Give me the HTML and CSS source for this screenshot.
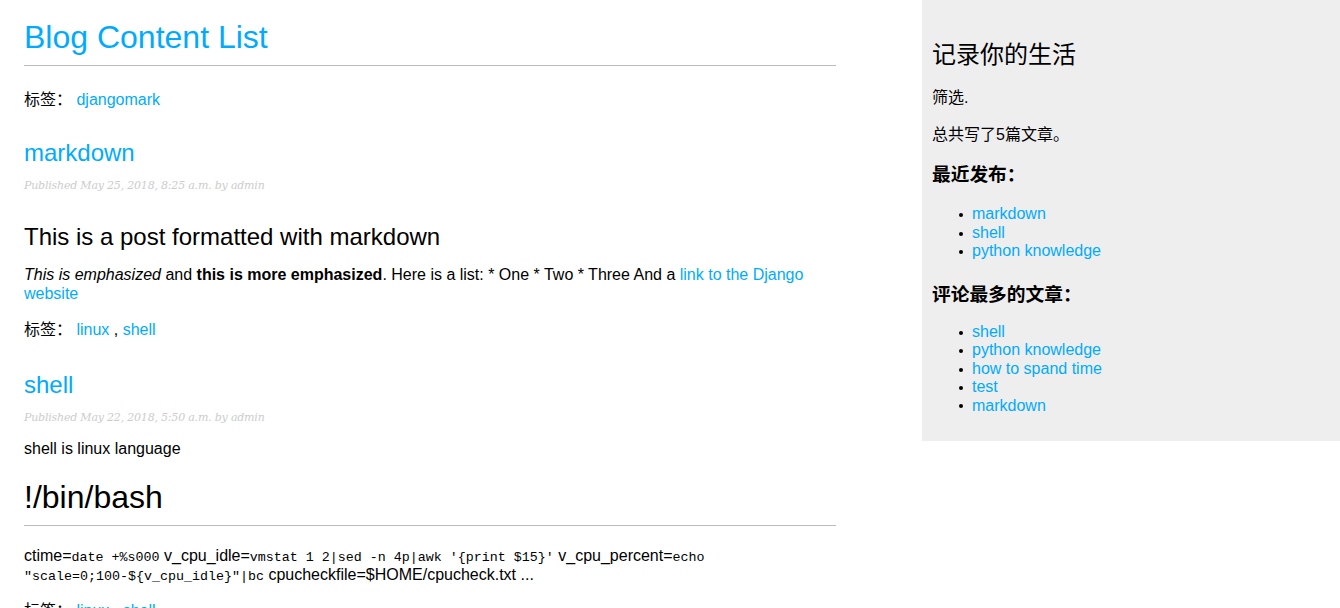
FILE: index.html
```html
<!DOCTYPE html>
<html lang="zh-CN">
<head>
<meta charset="utf-8">
<title>Blog Content List</title>
<link rel="stylesheet" href="styles.css">
</head>
<body>
<div class="page">
  <main class="content">
    <h1 class="page-title"><a href="#">Blog Content List</a></h1>
    <p class="tags tags-top">标签： <a href="#">djangomark</a></p>

    <article class="post">
      <h2 class="post-title"><a href="#">markdown</a></h2>
      <p class="date">Published May 25, 2018, 8:25 a.m. by admin</p>
      <div class="post-body">
        <h2>This is a post formatted with markdown</h2>
        <p><em>This is emphasized</em> and <strong>this is more emphasized</strong>. Here is a list: * One * Two * Three And a <a href="#">link to the Django website</a></p>
      </div>
      <p class="tags">标签： <a href="#">linux</a> , <a href="#">shell</a></p>
    </article>

    <article class="post">
      <h2 class="post-title"><a href="#">shell</a></h2>
      <p class="date">Published May 22, 2018, 5:50 a.m. by admin</p>
      <div class="post-body">
        <p>shell is linux language</p>
        <h1>!/bin/bash</h1>
        <p>ctime=<code>date +%s000</code> v_cpu_idle=<code>vmstat 1 2|sed -n 4p|awk '{print $15}'</code> v_cpu_percent=<code>echo "scale=0;100-${v_cpu_idle}"|bc</code> cpucheckfile=$HOME/cpucheck.txt ...</p>
      </div>
      <p class="tags">标签： <a href="#">linux</a> , <a href="#">shell</a></p>
    </article>
  </main>

  <aside class="sidebar">
    <h2>记录你的生活</h2>
    <p>筛选.</p>
    <p>总共写了5篇文章。</p>
    <h3 class="side-head">最近发布：</h3>
    <ul class="side-list">
      <li><a href="#">markdown</a></li>
      <li><a href="#">shell</a></li>
      <li><a href="#">python knowledge</a></li>
    </ul>
    <h3 class="side-head side-head-second">评论最多的文章：</h3>
    <ul class="side-list">
      <li><a href="#">shell</a></li>
      <li><a href="#">python knowledge</a></li>
      <li><a href="#">how to spand time</a></li>
      <li><a href="#">test</a></li>
      <li><a href="#">markdown</a></li>
    </ul>
  </aside>
</div>
</body>
</html>
```

FILE: styles.css
```css
html, body {
  margin: 0;
  padding: 0;
}

body {
  font-family: "Liberation Sans", Arial, "Noto Sans CJK SC", sans-serif;
  font-size: 16px;
  line-height: 1.15;
  color: #000;
  background: #fff;
}

a {
  color: #00abff;
  text-decoration: none;
}

.page {
  display: flex;
  justify-content: space-between;
  align-items: flex-start;
}

.content {
  width: 812px;
  padding-left: 24px;
}

h1 {
  font-size: 32px;
  font-weight: normal;
  line-height: 36.8px;
  margin: 21.44px 0;
  padding-bottom: 10px;
  border-bottom: 1px solid #bbb;
}

.page-title {
  margin-top: 19px;
  line-height: 36px;
}

.post-body h1 {
  margin-top: 20.44px;
  padding-bottom: 9px;
}

h2 {
  font-size: 24px;
  font-weight: normal;
  line-height: 27.6px;
  margin: 30px 0 0;
}

p {
  margin: 16px 0;
}

.tags {
  line-height: 22px;
}

.tags-top {
  padding-top: 2px;
  margin-bottom: -2px;
}

.date {
  font-family: "DejaVu Serif", Georgia, serif;
  font-style: italic;
  font-size: 11px;
  letter-spacing: -0.2px;
  line-height: 13.6px;
  color: #ccc;
  margin: 12px 0;
}

code {
  font-family: "Liberation Mono", "Courier New", monospace;
  font-size: 13.33px;
  line-height: 1;
}

.sidebar {
  width: 398px;
  padding: 10px;
  background: #eeeeee;
}

.sidebar h2 {
  line-height: 32px;
  margin-top: 29px;
}

.sidebar p {
  line-height: 21px;
}

.side-head {
  font-size: 18.72px;
  font-weight: bold;
  line-height: 22px;
  margin: 18.72px 0 19.72px;
}

.side-head-second {
  margin: 23.72px 0 16.72px;
}

.side-list {
  margin: 16px 0;
  padding-left: 40px;
  list-style: none;
}

.side-list li::before {
  content: "";
  display: inline-block;
  width: 4px;
  height: 4px;
  border-radius: 50%;
  background: #000;
  vertical-align: middle;
  margin-left: -13px;
  margin-right: 9px;
}
```
